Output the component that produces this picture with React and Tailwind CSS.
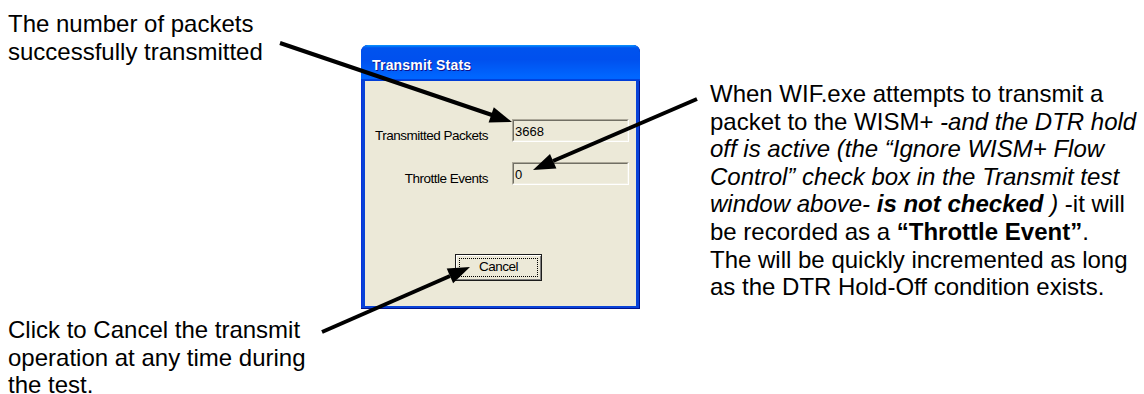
import React from 'react'

const sans = { fontFamily: '"Liberation Sans", Arial, sans-serif' }

const ReadOnlyBox = ({ value }) => (
  <div className="w-[117px] h-[23px] border border-t-[#aca899] border-l-[#aca899] border-b-white border-r-white">
    <div className="h-full border border-t-[#716f64] border-l-[#716f64] border-b-[#f1efe2] border-r-[#f1efe2] pl-[1px] pt-[3px] text-[13px] tracking-normal leading-[16px] text-black">
      {value}
    </div>
  </div>
)

const TransmitStats = () => (
  <div className="mt-[45px] w-[279px] h-[264px] flex flex-col rounded-t-[7px] bg-[#0842d8] shadow-[inset_-1px_-1px_#00138c,inset_1px_1px_#0831d9]">
    <div className="h-[36px] shrink-0 flex items-center pl-[11px] pt-[4px] rounded-t-[7px] bg-[linear-gradient(180deg,#0997ff,#0053ee_8%,#0050ee_40%,#06f_88%,#06f_93%,#005bff_95%,#003dd7_96%,#003dd7)]">
      <span className="text-white font-bold text-[14px] tracking-[0.2px] [text-shadow:1px_1px_#0f1089]">Transmit Stats</span>
    </div>
    <div className="flex-1 mx-[4px] mb-[3px] bg-[#ece9d8] pt-[38px] text-[13.5px] tracking-[-0.5px] text-black">
      <div className="grid grid-cols-[123px_117px] gap-x-[24px] gap-y-[20px]">
        <div className="text-right pt-[5px] leading-[23px] h-[23px]">Transmitted Packets</div>
        <ReadOnlyBox value="3668" />
        <div className="text-right pt-[5px] leading-[23px] h-[23px]">Throttle Events</div>
        <ReadOnlyBox value="0" />
      </div>
      <div className="mt-[69px] ml-[90px] w-[87px] h-[27px] border border-[#1c1c1c] bg-[#ece9d8] shadow-[inset_1px_1px_#fff,inset_-1px_-1px_#808080] p-[3px]">
        <div className="h-full border border-dotted border-black flex items-center justify-center">
          Cancel
        </div>
      </div>
    </div>
  </div>
)

export default function App() {
  return (
    <div className="relative w-[1144px] h-[394px] overflow-hidden bg-white flex text-black" style={sans}>
      <div className="w-[361px] shrink-0 pl-[8px] pt-[10px] text-[24px] leading-[27.6px]">
        <p>The number of packets<br />successfully transmitted</p>
        <p className="mt-[251px]">Click to Cancel the transmit<br />operation at any time during<br />the test.</p>
      </div>

      <TransmitStats />

      <div className="ml-[70px] pt-[80px] text-[24px] leading-[27.6px] whitespace-nowrap">
        <p>When WIF.exe attempts to transmit a</p>
        <p>packet to the WISM+ <i>-and the DTR hold</i></p>
        <p><i>off is active (the “Ignore WISM+ Flow</i></p>
        <p><i>Control” check box in the Transmit test</i></p>
        <p><i>window above- <b>is not checked</b> )</i> -it will</p>
        <p>be recorded as a <b>“Throttle Event”</b>.</p>
        <p>The will be quickly incremented as long</p>
        <p>as the DTR Hold-Off condition exists.</p>
      </div>

      <svg className="absolute inset-0 pointer-events-none" width="1144" height="394" viewBox="0 0 1144 394">
        <g stroke="black" strokeWidth="4">
          <line x1="280" y1="43" x2="492" y2="115" />
          <line x1="697" y1="99" x2="553" y2="161" />
          <line x1="322" y1="332" x2="450" y2="276" />
        </g>
        <g fill="black">
          <polygon points="512,122 488.6,122.5 493.8,107.3" />
          <polygon points="533,170 550,153.9 556.4,168.6" />
          <polygon points="470,267 453.1,283.2 446.7,268.5" />
        </g>
      </svg>
    </div>
  )
}
